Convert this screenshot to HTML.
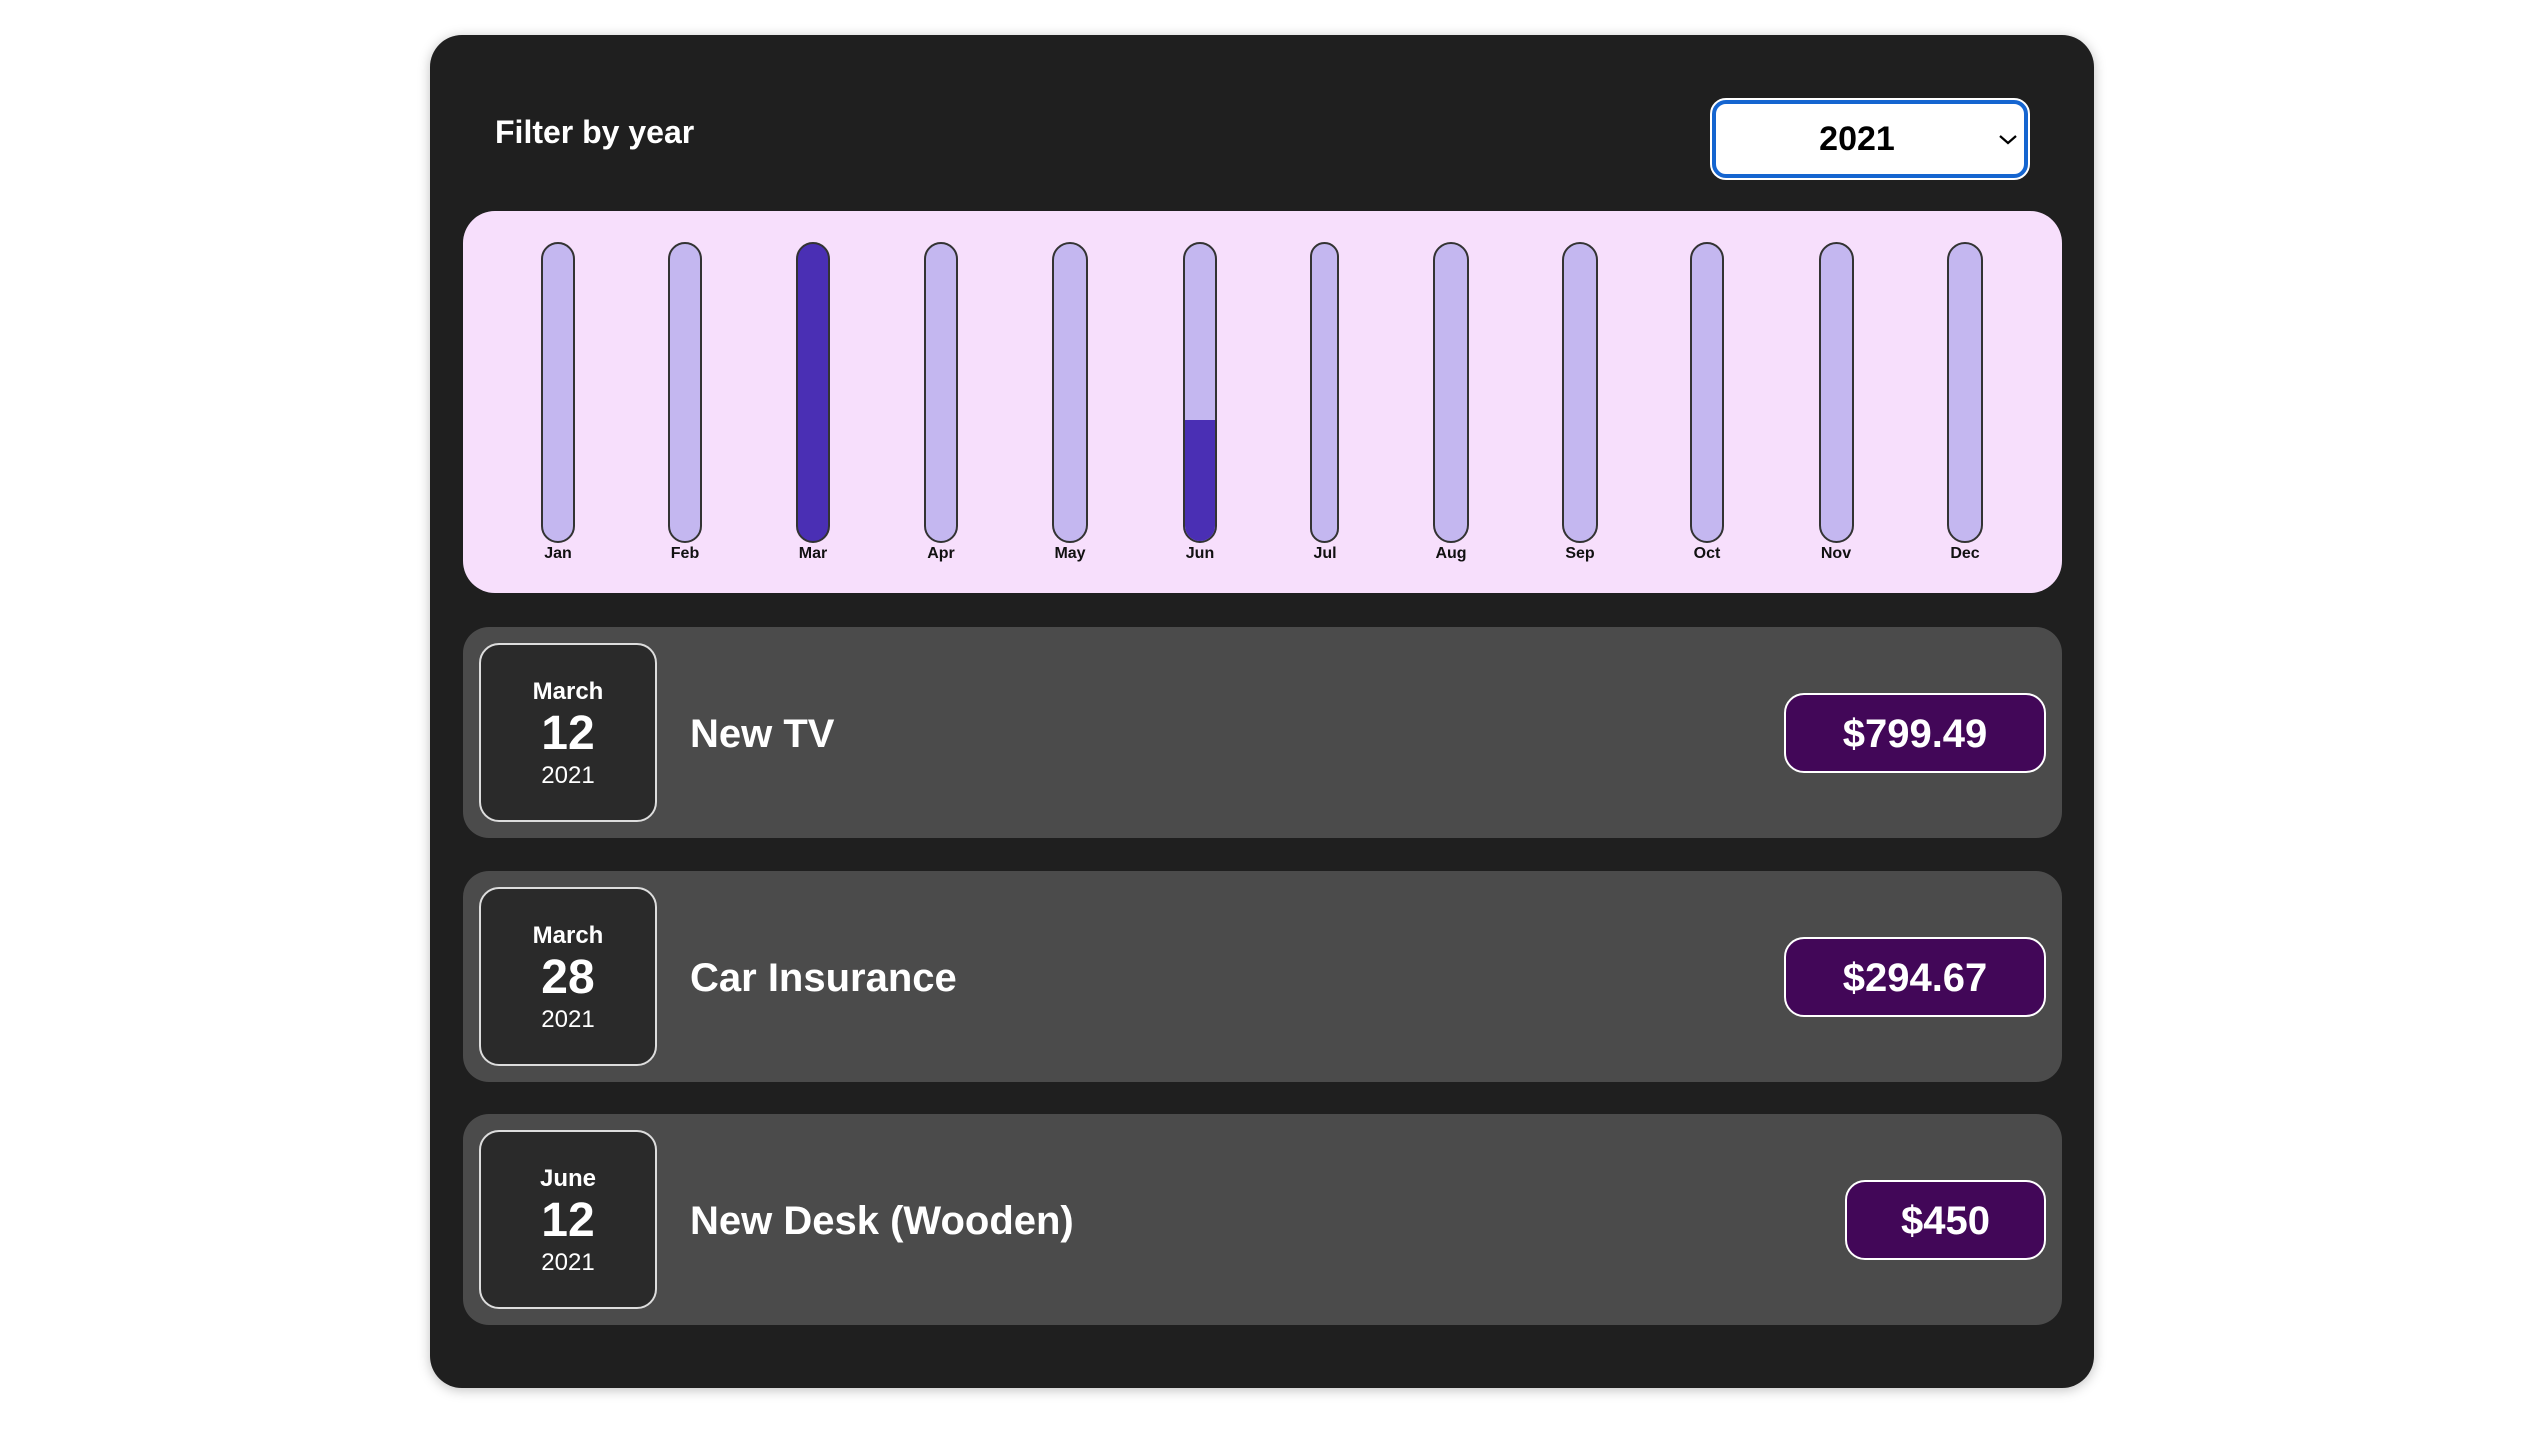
<!DOCTYPE html>
<html><head><meta charset="utf-8"><style>
*{margin:0;padding:0;box-sizing:border-box}
body{width:2528px;height:1438px;background:#fff;font-family:"Liberation Sans",Arial,sans-serif;position:relative;overflow:hidden}
.card{position:absolute;left:430px;top:35px;width:1664px;height:1353px;background:#1f1f1f;border-radius:32px;box-shadow:0 2px 12px rgba(0,0,0,.25)}
.title{position:absolute;left:495px;top:114px;color:#fff;font-weight:bold;font-size:32px}
.sel{position:absolute;left:1710px;top:98px;width:320px;height:82px;background:#fff;border:2px solid #fff;border-radius:16px}
.sel .in{position:absolute;inset:0;border:4px solid #1565d0;border-radius:14px}
.sel span{position:absolute;left:0;width:290px;text-align:center;top:20px;font-size:34px;font-weight:bold;color:#000}
.chart{position:absolute;left:463px;top:211px;width:1599px;height:382px;background:#f7dffc;border-radius:32px}
.bar{position:absolute;top:242px;height:301px;background:#c4b7f0;border:2px solid #333;border-radius:20px;overflow:hidden}
.bar .f{position:absolute;left:0;right:0;bottom:0;background:#4a2fb4}
.lbl{position:absolute;top:545px;width:80px;text-align:center;font-size:16px;font-weight:bold;color:#111}
.row{position:absolute;left:463px;width:1599px;height:211px;background:#4b4b4b;border-radius:26px}
.date{position:absolute;left:16px;top:16px;width:178px;height:179px;background:#2a2a2a;border:2px solid #ddd;border-radius:20px;color:#fff;text-align:center}
.date .m{position:absolute;top:33px;width:100%;font-size:24px;font-weight:bold}
.date .d{position:absolute;top:61px;width:100%;font-size:48px;font-weight:bold}
.date .y{position:absolute;top:117px;width:100%;font-size:24px}
.name{position:absolute;left:227px;top:85px;color:#fff;font-size:40px;font-weight:bold}
.price{position:absolute;top:66px;right:16px;height:80px;background:#420758;border:2px solid #fff;border-radius:20px;color:#fff;font-size:40px;font-weight:bold;text-align:center;line-height:78px}
</style></head><body>
<div class="card"></div>
<div class="title">Filter by year</div>
<div class="sel"><div class="in"></div><span>2021</span>
<svg style="position:absolute;left:286px;top:32px" width="20" height="14" viewBox="0 0 20 14"><path d="M2 4 L10 11 L18 4" fill="none" stroke="#000" stroke-width="2.2"/></svg></div>
<div class="chart"></div>

<div class="bar" style="left:541px;width:34px"></div><div class="lbl" style="left:518px">Jan</div>
<div class="bar" style="left:668px;width:34px"></div><div class="lbl" style="left:645px">Feb</div>
<div class="bar" style="left:796px;width:34px;background:#4a2fb4"></div><div class="lbl" style="left:773px">Mar</div>
<div class="bar" style="left:924px;width:34px"></div><div class="lbl" style="left:901px">Apr</div>
<div class="bar" style="left:1052px;width:36px"></div><div class="lbl" style="left:1030px">May</div>
<div class="bar" style="left:1183px;width:34px"><div class="f" style="height:121px"></div></div><div class="lbl" style="left:1160px">Jun</div>
<div class="bar" style="left:1310px;width:29px"></div><div class="lbl" style="left:1285px">Jul</div>
<div class="bar" style="left:1433px;width:36px"></div><div class="lbl" style="left:1411px">Aug</div>
<div class="bar" style="left:1562px;width:36px"></div><div class="lbl" style="left:1540px">Sep</div>
<div class="bar" style="left:1690px;width:34px"></div><div class="lbl" style="left:1667px">Oct</div>
<div class="bar" style="left:1819px;width:35px"></div><div class="lbl" style="left:1796px">Nov</div>
<div class="bar" style="left:1947px;width:36px"></div><div class="lbl" style="left:1925px">Dec</div>

<div class="row" style="top:627px"><div class="date"><div class="m">March</div><div class="d">12</div><div class="y">2021</div></div><div class="name">New TV</div><div class="price" style="width:262px">$799.49</div></div>
<div class="row" style="top:871px"><div class="date"><div class="m">March</div><div class="d">28</div><div class="y">2021</div></div><div class="name">Car Insurance</div><div class="price" style="width:262px">$294.67</div></div>
<div class="row" style="top:1114px"><div class="date"><div class="m">June</div><div class="d">12</div><div class="y">2021</div></div><div class="name">New Desk (Wooden)</div><div class="price" style="width:201px">$450</div></div>
</body></html>
